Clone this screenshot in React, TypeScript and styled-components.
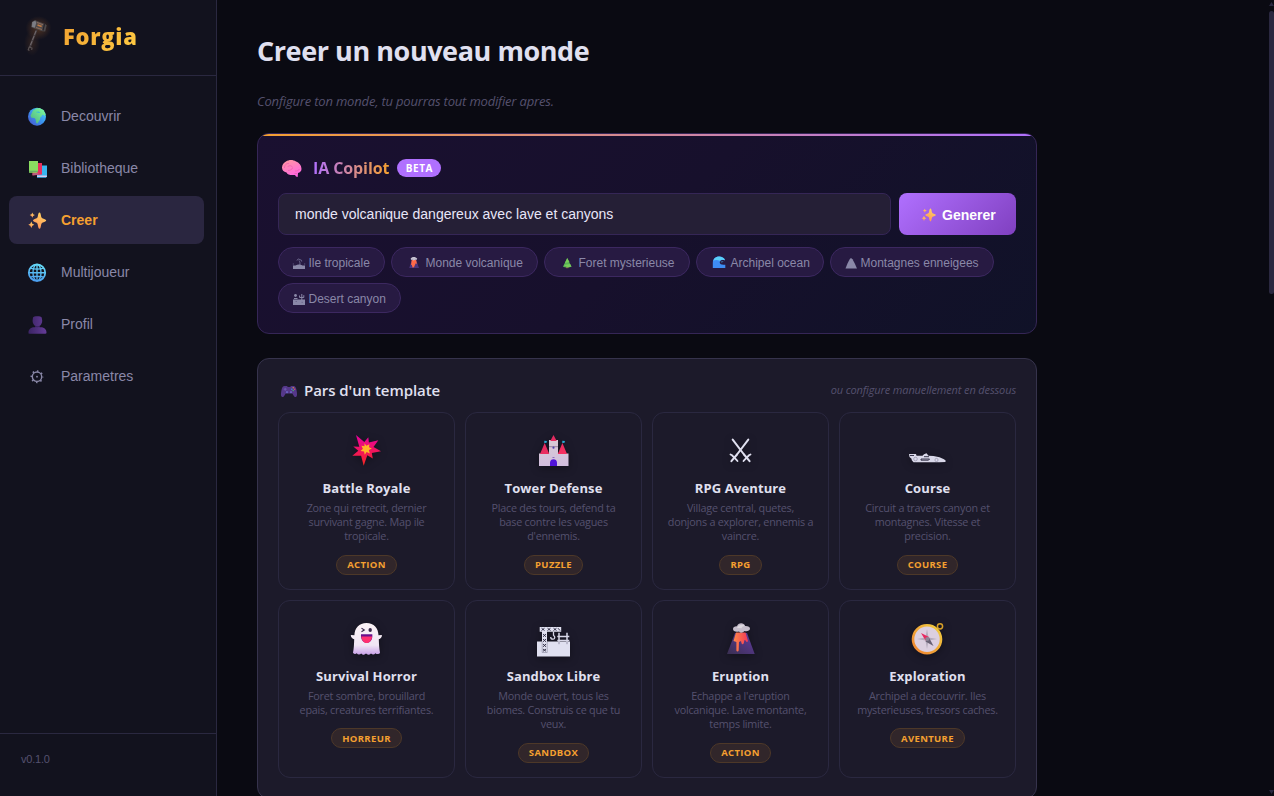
import React from "react";
import styled, { createGlobalStyle } from "styled-components";

const ui = `"Open Sans", "Noto Sans", sans-serif`;
const control = `"Liberation Sans", Arial, sans-serif`;

const GlobalStyle = createGlobalStyle`
  *, *::before, *::after { box-sizing: border-box; }
  html, body { margin: 0; height: 100%; overflow: hidden; background: #0a0a12; }
  body { font-family: ${ui}; color: #e0e0f0; }
  button, input { font-family: ${control}; margin: 0; }
  svg { display: block; flex: none; overflow: visible; }
  h1, h2, h3, p { margin: 0; }
`;

const Shell = styled.div`
  display: flex;
  height: 796px;
  overflow: hidden;
`;

/* ---------- sidebar ---------- */

const Sidebar = styled.aside`
  display: flex;
  flex-direction: column;
  flex: none;
  width: 217px;
  background: #12121e;
  border-right: 1px solid #2a2840;
`;

const Brand = styled.div`
  display: flex;
  align-items: center;
  height: 76px;
  padding: 0 0 3px 20px;
  gap: 11px;
  border-bottom: 1px solid #2a2840;
`;

const BrandName = styled.span`
  font-size: 22px;
  font-weight: 800;
  line-height: 30px;
  letter-spacing: 0.7px;
  background: linear-gradient(135deg, #f0a030, #ffcc44);
  -webkit-background-clip: text;
  background-clip: text;
  color: transparent;
`;

const Nav = styled.nav`
  display: flex;
  flex-direction: column;
  flex: 1;
  gap: 4px;
  padding: 16px 12px 0 9px;
`;

const NavItem = styled.button<{ $active?: boolean }>`
  display: flex;
  align-items: center;
  gap: 14px;
  height: 48px;
  padding: 0 18px;
  border: 0;
  border-radius: 8px;
  background: ${(p) => (p.$active ? "#2a2640" : "transparent")};
  color: ${(p) => (p.$active ? "#f5a030" : "#8a88a8")};
  font-size: 14px;
  font-weight: ${(p) => (p.$active ? 700 : 400)};
  text-align: left;
`;

const Version = styled.div`
  height: 63px;
  padding: 17px 21px;
  border-top: 1px solid #2a2840;
  color: #55516e;
  font: 11px/16px ${control};
  letter-spacing: -0.2px;
`;

/* ---------- page ---------- */

const Main = styled.main`
  flex: 1;
  padding: 31px 0 0 40px;
  overflow: hidden;
`;

const Column = styled.div`
  display: flex;
  flex-direction: column;
  width: 780px;
`;

const Title = styled.h1`
  font-size: 27px;
  font-weight: 700;
  line-height: 40px;
  letter-spacing: -0.43px;
  white-space: nowrap;
`;

const Subtitle = styled.p`
  margin-top: 20px;
  font-size: 13px;
  font-style: italic;
  line-height: 20px;
  letter-spacing: -0.18px;
  color: #55516e;
`;

const Copilot = styled.section`
  position: relative;
  height: 201px;
  margin-top: 22px;
  padding: 21px 20px 20px;
  border: 1px solid #352656;
  border-radius: 12px;
  background: linear-gradient(135deg, #1a1030 0%, #17102c 50%, #101228 100%);
  overflow: hidden;

  &::before {
    content: "";
    position: absolute;
    inset: 0 0 auto 0;
    height: 2px;
    background: linear-gradient(90deg, #f5a030, #b070ff);
  }
`;

const CopilotHead = styled.div`
  display: flex;
  align-items: center;
  height: 26px;
  padding-left: 3px;
`;

const CopilotTitle = styled.h2`
  margin-left: 10px;
  font-size: 16px;
  font-weight: 700;
  line-height: 22px;
  letter-spacing: -0.1px;
  background: linear-gradient(90deg, #b070ff, #f5a030);
  -webkit-background-clip: text;
  background-clip: text;
  color: transparent;
`;

const Beta = styled.span`
  display: flex;
  align-items: center;
  justify-content: center;
  width: 44px;
  height: 18px;
  margin-left: 8px;
  border-radius: 9px;
  background: #b070ff;
  color: #fff;
  font-size: 10px;
  font-weight: 700;
  letter-spacing: 0.6px;
`;

const PromptRow = styled.div`
  display: flex;
  gap: 8px;
  margin-top: 12px;
`;

const Prompt = styled.input`
  flex: 1;
  height: 42px;
  padding: 0 16px;
  border: 1px solid #352656;
  border-radius: 8px;
  background: #251f36;
  color: #e8e6f8;
  font-size: 14px;
  outline: none;
`;

const Generate = styled.button`
  display: flex;
  align-items: center;
  gap: 4px;
  width: 117px;
  height: 42px;
  padding: 1px 20px 0;
  border: 0;
  border-radius: 8px;
  background: linear-gradient(135deg, #b070ff, #8040c0);
  color: #fff;
  font-size: 14px;
  font-weight: 700;
`;

const Chips = styled.div`
  display: flex;
  flex-wrap: wrap;
  gap: 6px;
  margin-top: 12px;
`;

const Chip = styled.button<{ $w: number }>`
  display: flex;
  align-items: center;
  gap: 3.5px;
  width: ${(p) => p.$w}px;
  height: 30px;
  padding: 2px 0 0 14px;
  border: 1px solid #3c2860;
  border-radius: 15px;
  background: #271a42;
  color: #8a88a8;
  font-size: 12px;
  white-space: nowrap;
`;

const Templates = styled.section`
  margin-top: 24px;
  height: 441px;
  padding: 20px;
  border: 1px solid #36334c;
  border-radius: 12px;
  background: #1c1a2a;
`;

const TemplatesHead = styled.div`
  display: flex;
  align-items: center;
  height: 24px;
  padding-left: 3px;
`;

const TemplatesTitle = styled.h2`
  margin-left: 7px;
  padding-bottom: 2px;
  font-size: 15px;
  font-weight: 600;
  line-height: 22px;
  letter-spacing: -0.06px;
`;

const Hint = styled.span`
  margin-left: auto;
  padding-bottom: 4px;
  font-size: 11px;
  font-style: italic;
  letter-spacing: -0.13px;
  color: #55516e;
`;

const Grid = styled.div`
  display: grid;
  grid-template-columns: repeat(4, 1fr);
  grid-auto-rows: 178px;
  gap: 10px;
  margin-top: 9px;
`;

const Card = styled.article`
  display: flex;
  flex-direction: column;
  align-items: center;
  padding-top: 17px;
  border: 1px solid #2a2840;
  border-radius: 12px;

  svg { filter: drop-shadow(0 2px 4px rgba(0, 0, 0, 0.35)); }
`;

const CardTitle = styled.h3`
  margin-top: 8px;
  font-size: 13px;
  font-weight: 700;
  line-height: 20px;
  letter-spacing: 0.12px;
`;

const CardText = styled.p`
  margin-top: 3px;
  font-size: 10.8px;
  line-height: 14.2px;
  letter-spacing: -0.24px;
  text-align: center;
  white-space: pre;
  color: #55516e;
`;

const Tag = styled.span`
  display: flex;
  align-items: center;
  justify-content: center;
  height: 20px;
  margin-top: 11px;
  padding: 0 10px;
  border: 1px solid #4d3828;
  border-radius: 10px;
  background: #31262a;
  color: #f5a030;
  font-size: 9.5px;
  font-weight: 700;
  letter-spacing: 0.35px;
`;

const ScrollRail = styled.div`
  display: flex;
  flex-direction: column;
  align-items: center;
  width: 5px;
  height: 796px;
  padding: 2px 0;
  gap: 5px;
`;

const ScrollThumb = styled.div`
  width: 5px;
  height: 283px;
  margin-bottom: auto;
  border-radius: 3px;
  background: #2a2840;
`;

/* ---------- icons ---------- */

const Hammer = () => (
  <svg width="32" height="36" viewBox="0 0 32 36">
    <defs>
      <radialGradient id="glow"><stop offset="0" stopColor="#ff9030" stopOpacity=".26" /><stop offset="1" stopColor="#ff9030" stopOpacity="0" /></radialGradient>
    </defs>
    <ellipse cx="18.500" cy="10" rx="13" ry="12" fill="url(#glow)" />
    <ellipse cx="12" cy="25" rx="8" ry="13" fill="url(#glow)" opacity=".5" />
    <path d="M16.500 12L9.500 30" stroke="#474044" strokeWidth="2" />
    <path d="M16 13l-5.500 14" stroke="#7d7476" strokeWidth=".8" strokeDasharray="4 1.500" />
    <path d="M9.500 28.500l-1.300 3.200 1.200.8M9.500 29l2.500 1-.3 2" stroke="#5a5254" strokeWidth="1.100" fill="none" />
    <path d="M12 4l3-2 2 1 8 3 1.700 1.200-1.500 6.300-3-.3-9.200-3.200-2-1z" fill="#4d4849" />
    <path d="M12.300 4l3-1.200 1 2-1.500 5-2.900-1.100z" fill="#7c7d84" />
    <path d="M17 4.500l6 2.200M16 9.500l6 2" stroke="#8a6a58" strokeWidth="1.100" />
    <path d="M17.500 7l4.200 1.500" stroke="#c07840" strokeWidth="1.600" />
    <path d="M24.500 6l-1.500 6.500" stroke="#25232a" strokeWidth="1.200" />
  </svg>
);

const Earth = () => (
  <svg width="20" height="20" viewBox="0 0 20 20">
    <defs><linearGradient id="sea" x1="0" y1="1" x2="1" y2="0"><stop offset="0" stopColor="#4a50c8" /><stop offset=".5" stopColor="#3a94f0" /><stop offset="1" stopColor="#4adcf8" /></linearGradient>
      <linearGradient id="land" x1="0" y1="1" x2="1" y2="0"><stop offset="0" stopColor="#4eae80" /><stop offset="1" stopColor="#7effa0" /></linearGradient></defs>
    <circle cx="10" cy="10.700" r="9" fill="url(#sea)" />
    <path d="M5 6.500l1-2L9 2.500l3.500-.5 4 2 2.200 4.500-1 1.500-1.500-1.200-1 .2-.7 1.500-1 .5-.5 2.500-2.500 4-1.300-.5-.5-3.500L7.500 12l-3-.3-1-2z" fill="url(#land)" />
    <path d="M8.500 6l3-.5 2 1-1.500.5z" fill="#3ab8d8" />
  </svg>
);

const Books = () => (
  <svg width="20" height="20" viewBox="0 0 20 20">
    <path d="M10 7.500h10v11l-1 1.200h-9z" fill="#38b6f0" /><path d="M10 17.500h9.800v1.500H10z" fill="#d8c8f0" />
    <path d="M5.500 5h9.500v11.500L5.500 17.500z" fill="#e8305e" /><path d="M5.500 15.200l6-.2v1.700l-6 .6z" fill="#b86080" />
    <path d="M2 3h9v10.500l-1 1.300H2z" fill="#8ade60" /><path d="M2.300 12.800h8.500v.9H2.300z" fill="#5e9a68" />
  </svg>
);

const Sparkles = ({ w = 20, h = 20, box = "0 0 20 20" }: { w?: number; h?: number; box?: string }) => (
  <svg width={w} height={h} viewBox={box}>
    <defs><linearGradient id="spark" x1="0" y1="1" x2=".5" y2="0"><stop offset="0" stopColor="#ff8858" /><stop offset="1" stopColor="#ffd060" /></linearGradient></defs>
    <g fill="url(#spark)">
      <path d="M12.500 2.400c1 0 1.300 2 1.700 4.300.3 1 .8 1.400 1.700 1.800 1.900.7 3.300 1.100 3.300 2s-1.400 1.300-3.300 2c-.9.400-1.400.9-1.700 1.900-.4 2.200-.7 4.300-1.700 4.300s-1.400-2.100-1.800-4.300c-.2-1-.7-1.500-1.700-1.900C7.200 11.800 6 11.400 6 10.500s1.200-1.300 3-2c1-.4 1.500-.8 1.700-1.800.4-2.300.8-4.300 1.800-4.300z" />
      <path d="M5.300 2.500l.8 1.800 1.800.8-1.800.8-.8 1.900-.8-1.900-1.800-.8 1.800-.8z" />
      <path d="M4.300 11.500l1 2.200 2 1-2 1-1 2.300-1-2.300-2-1 2-1z" />
    </g>
  </svg>
);

const Meridians = () => (
  <svg width="20" height="20" viewBox="0 0 20 20" fill="none" strokeWidth="1.350">
    <defs><linearGradient id="mer" gradientUnits="userSpaceOnUse" x1="6" y1="20" x2="12" y2="2"><stop offset="0" stopColor="#4898f0" /><stop offset="1" stopColor="#66dcf8" /></linearGradient></defs>
    <g stroke="url(#mer)">
      <circle cx="10" cy="10.700" r="8.200" strokeWidth="1.800" /><ellipse cx="10" cy="10.700" rx="4" ry="8.300" />
      <path d="M10 2.500V19M1.700 10.700h16.600M3.300 6.200c3.500 1.300 9.900 1.300 13.400 0M3.300 15.200c3.500-1.300 9.900-1.300 13.400 0" />
    </g>
  </svg>
);

const Bust = () => (
  <svg width="20" height="20" viewBox="0 0 20 20">
    <defs><linearGradient id="bust" gradientUnits="userSpaceOnUse" x1="3" y1="0" x2="18" y2="0"><stop offset="0" stopColor="#3e2668" /><stop offset="1" stopColor="#623a94" /></linearGradient></defs>
    <path d="M6 3.500C6.500 1.800 14 1.800 14.700 3.500l.5 3c.2 2.300-1.200 4.700-2.700 5.500v1.300H14c3 0 5.500 2.200 5.500 5.200 0 .8-.4 1.200-1 1.200h-16c-.6 0-1-.4-1-1.200 0-3 2.500-5.200 5.500-5.200h1.300V12c-1.500-.8-2.900-3.200-2.700-5.500z" fill="url(#bust)" />
    <path d="M8.300 12.200c1.200.7 3 .7 4.200 0" stroke="#301c54" strokeWidth=".8" fill="none" />
  </svg>
);

const Gear = () => (
  <svg width="20" height="20" viewBox="0 0 20 20" fill="none" stroke="#8a88a8">
    <circle cx="10" cy="10.700" r="4.700" strokeWidth="1.400" />
    <circle cx="10" cy="10.700" r="5.700" strokeWidth="1.600" strokeDasharray="1.500 2.977" strokeDashoffset=".75" />
    <circle cx="10" cy="10.700" r=".9" fill="#8a88a8" stroke="none" />
  </svg>
);

const Brain = () => (
  <svg width="22" height="20" viewBox="0 0 22 20">
    <defs><linearGradient id="brain" x1="0" y1="0" x2=".5" y2="1"><stop offset="0" stopColor="#ff9a9c" /><stop offset="1" stopColor="#ff68e0" /></linearGradient></defs>
    <path d="M1 9.500c0-3 2-5 4-6 3-2 7-2 10 0 3 1 5.500 4 5.500 7.500 0 2-1.500 3.500-3.500 4l-.3 4-1.700-.5-1-1.500C9 17.300 6.500 16.700 5.500 14.500 2.500 14 1 12 1 9.500z" fill="url(#brain)" />
    <path d="M3.500 10c0-3 2-5 4.500-4.500M6.500 9c1.500-2 4.500-1.500 5 .5M7 12.500c2 0 4-1 4.500-2.500M14 13c2 0 4-.5 4.500-2M13.500 15.500h2.500" stroke="#ee5fae" strokeWidth=".8" fill="none" />
  </svg>
);

const Gamepad = () => (
  <svg width="16" height="16" viewBox="0 0 16 16">
    <path d="M3.500 3h2.500l.8 1h2.400l.8-1h2.500c1.600 0 2.500 1.400 3 4 .6 3 .9 5.500 0 6.500-1.200 1.300-2.300.4-3.300-1.500l-.9-1.500H4.700L3.800 12c-1 1.900-2.100 2.800-3.300 1.500-.9-1-.6-3.500 0-6.500.5-2.600 1.400-4 3-4z" fill="#55388a" />
    <path d="M2.700 6.200h3M4.200 4.800v3" stroke="#6f5cb0" strokeWidth="1" /><circle cx="6" cy="9.200" r="1.100" fill="#6a62c0" /><circle cx="10" cy="9.200" r="1.100" fill="#6a62c0" />
    <circle cx="12.200" cy="4.800" r=".75" fill="#d89838" /><circle cx="13.600" cy="6.200" r=".75" fill="#e04868" /><circle cx="12.200" cy="7.600" r=".75" fill="#48b070" /><circle cx="10.800" cy="6.200" r=".75" fill="#3a90e0" />
  </svg>
);

const Island = () => (
  <svg width="12" height="13" viewBox="0 0 12 13">
    <path d="M0 8.500h2.500c2-1.500 5-1.500 7 0H12V12H0z" fill="#8a88a8" />
    <path d="M.3 8.500V6M11.700 8.500V6" stroke="#5d587e" strokeWidth=".6" />
    <path d="M6.800 8c.3-2 .2-3-.8-4.500M4 3.500C4.500 1.800 6.300 1.500 7 3c1.300-.6 1.700.3 1.700 1.500" stroke="#77749a" strokeWidth=".9" fill="none" />
  </svg>
);

const MiniVolcano = () => (
  <svg width="16" height="14" viewBox="0 0 16 14">
    <path d="M5.700 4.500h4.600L13 12H3.200z" fill="#4b367c" /><path d="M5.700 4h4.400l.9 4-1.200-.8-.8 1.500-1 2.600-1.500.2-.7-2.800-.8.300z" fill="#ff6a48" />
    <path d="M4.700 2.600c.8-2.300 5.300-2.300 6.400 0 .4 1.300-1 1.500-2 1.200-1.200 1-2 .8-2.700 0-1 .3-1.800-.1-1.700-1.200z" fill="#c4bfcf" />
  </svg>
);

const Tree = () => (
  <svg width="16" height="14" viewBox="0 0 16 14">
    <path d="M7 10h2.300v2.200H7z" fill="#a05848" /><path d="M8.200 2l4.300 8.700c-2 1.100-6.600 1.100-8.500 0z" fill="#59b255" /><path d="M8.200 2L5.900 6.900l4.700-.9zM4.600 9l6.600-1 1.300 2.400-3.500.8z" fill="#85d85c" opacity=".7" />
  </svg>
);

const Wave = () => (
  <svg width="16" height="14" viewBox="0 0 16 14">
    <path d="M1.800 12V7C1.800 2.700 4.500.6 8 .6c3.500 0 5.500 1.900 6 3.700-2-.6-5 -.4-5.300 2 0 2 2.300 2.900 5.600 2.400V12z" fill="#3e8cf4" /><path d="M2.300 4.800C3.300 1.800 6 .4 8.500.6c3 .2 4.800 1.800 5.500 3.700-2-.8-4-.8-5.300.4C6.700 3.800 4 3.600 2.300 4.800z" fill="#5ad0f8" />
    <path d="M9.700 5.300l1.400 1 1-1.300" stroke="#4a94c8" strokeWidth=".7" fill="none" />
  </svg>
);

const Peak = () => (
  <svg width="12" height="13" viewBox="0 0 12 13">
    <path d="M.5 11.500l2-5L4.800 2 6 1l1.500 1.300L10 7l2 4.500z" fill="#8a88a8" />
  </svg>
);

const Cactus = () => (
  <svg width="12" height="13" viewBox="0 0 12 13">
    <path d="M0 6.500h12V12H0z" fill="#8a88a8" /><circle cx="2.500" cy="2.500" r="1.400" fill="#8a88a8" />
    <path d="M8.800 7.500V1M6.600 2.500v2h4.200V2.200M1 5.500h3.500" stroke="#8a88a8" strokeWidth="1" fill="none" />
    <path d="M2.500 8.500h1.500M8.500 9.300h1.500" stroke="#5d587e" strokeWidth=".6" />
  </svg>
);

const Art = ({ children }: { children: React.ReactNode }) => (
  <svg width="41" height="40" viewBox="0 0 41 40">{children}</svg>
);

const Burst = () => (
  <Art>
    <defs><linearGradient id="burst" x1="0" y1="0" x2="0" y2="1"><stop offset="0" stopColor="#e800a0" /><stop offset="1" stopColor="#f82820" /></linearGradient></defs>
    <path d="M10 5l8.300 7 4-4.700.6 5.200 9.400-2.200L27.500 17l7.500 4.300-9.200 1.600 1 5.600-5.500-3.200-3.600 10.400-2.600-10-8.800 0 6-5-5-4.200 6 .3z" fill="url(#burst)" />
    <path d="M18.500 13.200l1.900 2.600 3-1.600-.4 3 2.900 1.400-3 1.500.9 3.300-3.200-1.500-1.800 2.900-.8-3.400-3.400-.5 2.300-2.200-1.500-3 3.100.5z" fill="#ffb428" />
  </Art>
);

const Castle = () => (
  <Art>
    <defs><linearGradient id="wall" x1="0" y1="0" x2="0" y2="1"><stop offset="0" stopColor="#d8cad4" /><stop offset="1" stopColor="#d2bede" /></linearGradient>
      <linearGradient id="roof" x1="0" y1="0" x2="1" y2="1"><stop offset="0" stopColor="#d82860" /><stop offset="1" stopColor="#f83060" /></linearGradient></defs>
    <path d="M6 23.500h10V10h9v13.500h10.500V36H6z" fill="url(#wall)" />
    <path d="M16 16.700h9" stroke="#857290" strokeWidth=".8" />
    <path d="M17.300 11L20.500 5l3.200 6zM7 24l4.700-11 4.600 11zM24.800 24l4.600-11L34 24z" fill="url(#roof)" />
    <path d="M11.300 10.800l2.600.2-.3 1.700-2.300.3zM29.300 10.800l2.600.2-.3 1.700-2.300.3z" fill="#28b0d8" />
    <path d="M17 36v-3.500c0-4.500 7-4.500 7 0V36z" fill="#5014d8" /><circle cx="20.500" cy="17.700" r="1.100" fill="#5040a8" />
    <path d="M19.500 27.500h2" stroke="#8060b8" strokeWidth=".9" />
  </Art>
);

const Swords = () => (
  <Art>
    <g stroke="#e0e0f0" fill="none" strokeLinecap="round">
      <path d="M12.700 9.600L24 24.500M28.300 9.600L17 24.500" strokeWidth="2" />
      <path d="M24 24.500l5.600 6.700M17 24.500l-5.600 6.700" strokeWidth="2" />
      <path d="M30.500 24.500l-1.500.8-4.500 4.500-1 1.200M10.500 24.500l1.500.8 4.500 4.500 1 1.200" strokeWidth="1.800" />
    </g>
  </Art>
);

const RaceCar = () => (
  <Art>
    <path d="M2 24h7l.5 1.800h6L17 24.200l2.500-.9 2 2.400 5 .3 6 1.200 4.500 2 1.800 1.600-.5 1.200-6 .2H6.500l-1.700-2-.3-1.500L2.500 27z" fill="#d9d8e9" />
    <path d="M3 25.500h4M14 29h8.500l-1 1.200H14zM17 26.700h5" stroke="#26243a" strokeWidth=".9" fill="none" />
    <circle cx="8.500" cy="29" r="1.800" fill="none" stroke="#8a88a0" strokeWidth=".6" /><circle cx="29.500" cy="30" r="1.600" fill="none" stroke="#8a88a0" strokeWidth=".6" />
  </Art>
);

const Ghost = () => (
  <Art>
    <defs><linearGradient id="ghost" x1="0" y1="0" x2="0" y2="1"><stop offset="0" stopColor="#fbf3f6" /><stop offset=".7" stopColor="#f0e6f4" /><stop offset="1" stopColor="#c8a0e8" /></linearGradient></defs>
    <path d="M20.500 5c7.500 0 11.800 5 12 12.300l3.200-.2c.8.800-.7 3.600-2.900 4.100.2 5.800.4 9 1.200 13.500-1 1.800-3.300 1.800-4.500.5-1.500 1.500-3 1.600-4.500.2-1.500 1.500-3.500 1.900-5 .2-1.400 1.700-3.500 1.300-4.800-.2-1.500 1.400-3.200 1.300-4.500-.2-1.300 1.200-2.700.8-3.700-.5.900-4.500 1-7.700 1.200-13.500C6 20.700 4.300 18 5 17.100l3.400.2C8.600 10 13 5 20.500 5z" fill="url(#ghost)" />
    <path d="M15.500 10.200l2.800 1.700-2.800 1.800" stroke="#382848" strokeWidth="1.100" fill="none" /><ellipse cx="24.200" cy="12" rx="1.700" ry="2" fill="#382848" />
    <path d="M15 16.300h11.300c.6 5-2 8.700-5.600 8.700S14.500 21.300 15 16.300z" fill="#68108c" /><path d="M15.300 18.500h10.800c-.5 4-2.500 6.500-5.400 6.500s-4.900-2.500-5.400-6.500z" fill="#ff3070" />
  </Art>
);

const Crane = () => (
  <Art>
    <path d="M4 23.500h33v15H4z" fill="#e0e0f0" />
    <path d="M6.700 9h21.500v4.700H6.700zM9 13.700h5V35H9z" fill="#e0e0f0" />
    <path d="M8.500 10.200l3 2.300M11.500 10.200l-3 2.300M14.500 10.200l3 2.300M17.500 10.200l-3 2.300M20.500 10.200l3 2.300M23.500 10.200l-3 2.300M25 10.200l2 2.300" stroke="#26243a" strokeWidth=".9" />
    <path d="M10 16l3 2.800M13 16l-3 2.800M10 21l3 2.800M13 21l-3 2.800M10 26l3 2.800M13 26l-3 2.800M10 31l3 2.300M13 31l-3 2.300" stroke="#26243a" strokeWidth=".9" />
    <path d="M9.200 23.500V34.500h5V23.500" stroke="#77758a" strokeWidth=".5" fill="none" />
    <path d="M20.500 13.700v3.500c2 1.500 1.500 4-.5 4s-2.300-1-2.300-2.200" stroke="#d8d7e8" strokeWidth="1.300" fill="none" />
    <path d="M26 14.700v11M34 14.700v11M24.300 18.500h12M24.300 22.500h12" stroke="#d8d7e8" strokeWidth="1.500" />
    <path d="M26 23.700v2.500M34 23.700v2.500" stroke="#9a98ae" strokeWidth="1" />
  </Art>
);

const Volcano = () => (
  <Art>
    <defs><linearGradient id="rock" x1="0" y1="1" x2="1" y2="0"><stop offset="0" stopColor="#392f50" /><stop offset="1" stopColor="#633ba4" /></linearGradient>
      <linearGradient id="lava" x1="0" y1="0" x2="1" y2="0"><stop offset="0" stopColor="#ff8848" /><stop offset="1" stopColor="#f03858" /></linearGradient></defs>
    <path d="M15 15h12l7.700 21H7z" fill="url(#rock)" />
    <path d="M16 14.500h9.500l2.500 8.500c-.7 1.500-2 1-2.300-.5l-1.200-.5-.7 3c-.5 1.600-2 1.600-2.300 0L21 23l-2 1-.3 8.500c-.3 1.200-2 1.200-2.300 0V24l-2.900-1z" fill="url(#lava)" />
    <path d="M13 11c0-2 2-3 4-2.800C18 4 24.500 4.500 25 8c3-.2 5 .8 5 2.800 0 2.200-3.500 3-5.500 2.200-2 2-4 2.300-5.500.5-3 .8-6 0-6-2.500z" fill="#c5bdcb" /><path d="M17 10c1.500-3.500 6-4 8-2-2 0-3 .8-3.500 2.200z" fill="#ddd9df" />
  </Art>
);

const Compass = () => (
  <Art>
    <defs><linearGradient id="brass" x1="0" y1="1" x2="1" y2="0"><stop offset="0" stopColor="#f08030" /><stop offset="1" stopColor="#f0d040" /></linearGradient></defs>
    <circle cx="33" cy="8.300" r="2.600" fill="none" stroke="#d8a028" strokeWidth="1.500" />
    <circle cx="20" cy="21.200" r="14" fill="#dccfe0" stroke="url(#brass)" strokeWidth="2.600" />
    <path d="M20 11l1.500 8.500L30 21l-8.500 1.500L20 31l-1.500-8.500L10 21l8.500-1.500z" fill="#b4aabc" />
    <path d="M14 15l8 4-3.500 3.500z" fill="#e82860" /><path d="M26.500 28l-8-4.500L22 19.500z" fill="#686074" /><circle cx="20.300" cy="21" r="2.100" fill="#8c8496" />
  </Art>
);

/* ---------- data ---------- */

const nav = [
  { label: "Decouvrir", icon: <Earth /> },
  { label: "Bibliotheque", icon: <Books /> },
  { label: "Creer", icon: <Sparkles />, active: true },
  { label: "Multijoueur", icon: <Meridians /> },
  { label: "Profil", icon: <Bust /> },
  { label: "Parametres", icon: <Gear /> },
];

const chips = [
  { label: "Ile tropicale", icon: <Island />, w: 107 },
  { label: "Monde volcanique", icon: <MiniVolcano />, w: 147 },
  { label: "Foret mysterieuse", icon: <Tree />, w: 146 },
  { label: "Archipel ocean", icon: <Wave />, w: 128 },
  { label: "Montagnes enneigees", icon: <Peak />, w: 164 },
  { label: "Desert canyon", icon: <Cactus />, w: 123 },
];

const templates = [
  { name: "Battle Royale", text: "Zone qui retrecit, dernier\nsurvivant gagne. Map ile\ntropicale.", tag: "ACTION", icon: <Burst /> },
  { name: "Tower Defense", text: "Place des tours, defend ta\nbase contre les vagues\nd'ennemis.", tag: "PUZZLE", icon: <Castle /> },
  { name: "RPG Aventure", text: "Village central, quetes,\ndonjons a explorer, ennemis a\nvaincre.", tag: "RPG", icon: <Swords /> },
  { name: "Course", text: "Circuit a travers canyon et\nmontagnes. Vitesse et\nprecision.", tag: "COURSE", icon: <RaceCar /> },
  { name: "Survival Horror", text: "Foret sombre, brouillard\nepais, creatures terrifiantes.", tag: "HORREUR", icon: <Ghost /> },
  { name: "Sandbox Libre", text: "Monde ouvert, tous les\nbiomes. Construis ce que tu\nveux.", tag: "SANDBOX", icon: <Crane /> },
  { name: "Eruption", text: "Echappe a l'eruption\nvolcanique. Lave montante,\ntemps limite.", tag: "ACTION", icon: <Volcano /> },
  { name: "Exploration", text: "Archipel a decouvrir. Iles\nmysterieuses, tresors caches.", tag: "AVENTURE", icon: <Compass /> },
];

export default function App() {
  return (
    <Shell>
      <GlobalStyle />
      <Sidebar>
        <Brand>
          <Hammer />
          <BrandName>Forgia</BrandName>
        </Brand>
        <Nav>
          {nav.map((n) => (
            <NavItem key={n.label} $active={n.active}>
              {n.icon}
              {n.label}
            </NavItem>
          ))}
        </Nav>
        <Version>v0.1.0</Version>
      </Sidebar>
      <Main>
        <Column>
          <Title>Creer un nouveau monde</Title>
          <Subtitle>Configure ton monde, tu pourras tout modifier apres.</Subtitle>
          <Copilot>
            <CopilotHead>
              <Brain />
              <CopilotTitle>IA Copilot</CopilotTitle>
              <Beta>BETA</Beta>
            </CopilotHead>
            <PromptRow>
              <Prompt defaultValue="monde volcanique dangereux avec lave et canyons" />
              <Generate>
                <Sparkles w={19} h={16} box="-2 0.5 24 20" />
                Generer
              </Generate>
            </PromptRow>
            <Chips>
              {chips.map((c) => (
                <Chip key={c.label} $w={c.w}>
                  {c.icon}
                  {c.label}
                </Chip>
              ))}
            </Chips>
          </Copilot>
          <Templates>
            <TemplatesHead>
              <Gamepad />
              <TemplatesTitle>Pars d'un template</TemplatesTitle>
              <Hint>ou configure manuellement en dessous</Hint>
            </TemplatesHead>
            <Grid>
              {templates.map((t) => (
                <Card key={t.name}>
                  {t.icon}
                  <CardTitle>{t.name}</CardTitle>
                  <CardText>{t.text}</CardText>
                  <Tag>{t.tag}</Tag>
                </Card>
              ))}
            </Grid>
          </Templates>
        </Column>
      </Main>
      <ScrollRail>
        <svg width="5" height="4" viewBox="0 0 5 4"><path d="M0 4L2.500 0 5 4z" fill="#2a2840" /></svg>
        <ScrollThumb />
        <svg width="5" height="4" viewBox="0 0 5 4"><path d="M0 0L2.500 4 5 0z" fill="#2a2840" /></svg>
      </ScrollRail>
    </Shell>
  );
}
